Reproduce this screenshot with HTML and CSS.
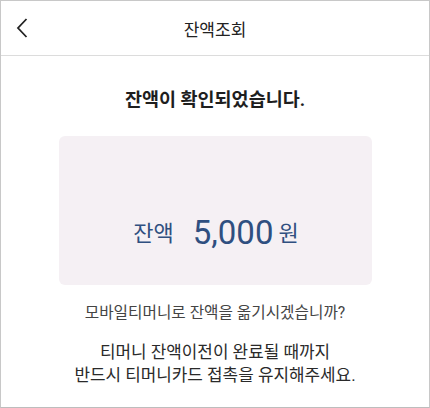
FILE: index.html
```html
<!DOCTYPE html>
<html>
<head>
  <meta charset="UTF-8">
  <link rel="stylesheet" href="styles.css">
</head>
<body>
  <div class="screen">
    <div class="header">
      <button class="back-btn">
        <svg width="14" height="22" viewBox="0 0 14 22"><path d="M11.5 2 L3 11 L11.5 20" fill="none" stroke="#222" stroke-width="1.8"/></svg>
      </button>
      <div class="header-title">잔액조회</div>
    </div>

    <div class="content">
      <div class="result-title">잔액이 확인되었습니다.</div>

      <div class="balance-card">
        <span class="balance-label">잔액</span>
        <span class="balance-amount">5,000</span>
        <span class="balance-unit">원</span>
      </div>

      <div class="question">모바일티머니로 잔액을 옮기시겠습니까?</div>

      <div class="notice">
        티머니 잔액이전이 완료될 때까지<br>
        반드시 티머니카드 접촉을 유지해주세요.
      </div>
    </div>
  </div>
</body>
</html>
```

FILE: styles.css
```css
body {
  margin: 0;
  font-family: Roboto, "Noto Sans CJK KR", sans-serif;
  background: #fff;
}

.screen {
  width: 430px;
  height: 408px;
  box-sizing: border-box;
  border: 1px solid #c8c8c8;
  border-bottom-color: #bdbdbd;
  overflow: hidden;
}

.header {
  position: relative;
  height: 54px;
  border-bottom: 1px solid #dcdcdc;
  display: flex;
  align-items: center;
  justify-content: center;
}

.back-btn {
  position: absolute;
  left: 14px;
  top: 16px;
  background: none;
  border: none;
  padding: 0;
  width: 14px;
  height: 22px;
}

.header-title {
  font-size: 17px;
  color: #222;
}

.content {
  display: flex;
  flex-direction: column;
  align-items: center;
}

.result-title {
  margin-top: 29px;
  font-size: 18.5px;
  font-weight: 700;
  color: #1e1e1e;
}

.balance-card {
  margin-top: 25px;
  width: 313px;
  height: 149px;
  box-sizing: border-box;
  background: #f5f0f4;
  border-radius: 6px;
  display: flex;
  align-items: flex-end;
  justify-content: center;
  padding-bottom: 36px;
  padding-left: 2px;
  color: #2f4f80;
}

.balance-label {
  font-size: 22px;
  margin-right: 19px;
  margin-bottom: 2px;
}

.balance-amount {
  font-size: 33px;
  line-height: 1;
}

.balance-unit {
  font-size: 22px;
  margin-left: 5px;
  margin-bottom: 2px;
}

.question {
  margin-top: 15px;
  font-size: 15.7px;
  color: #444;
}

.notice {
  margin-top: 18px;
  font-size: 16.9px;
  line-height: 23px;
  color: #2a2a2a;
  text-align: center;
}
```
